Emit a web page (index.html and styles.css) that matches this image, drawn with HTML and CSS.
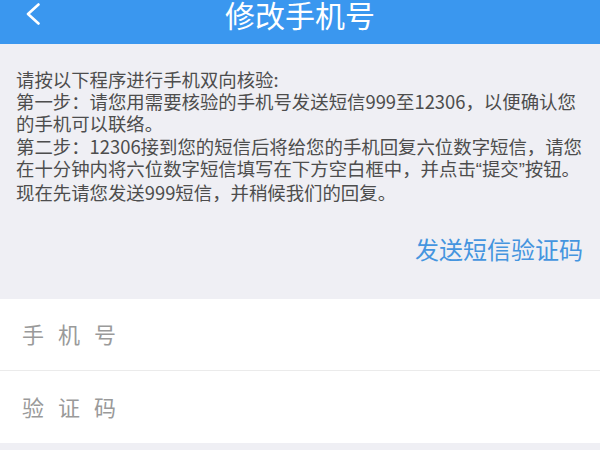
FILE: index.html
```html
<!DOCTYPE html>
<html lang="zh-CN">
<head>
<meta charset="utf-8">
<title>修改手机号</title>
<link rel="stylesheet" href="styles.css">
</head>
<body>
<header class="topbar">
  <span class="back">
    <svg width="16" height="22" viewBox="0 0 16 22"><polyline points="13.5,1.5 3,11 13.5,20.5" fill="none" stroke="#fff" stroke-width="2.6" stroke-linecap="round" stroke-linejoin="round"/></svg>
  </span>
  <h1 class="title">修改手机号</h1>
</header>
<main class="content">
  <div class="intro">
    <span class="line">请按以下程序进行手机双向核验:</span>
    <span class="line">第一步：请您用需要核验的手机号发送短信999至12306，以便确认您</span>
    <span class="line">的手机可以联络。</span>
    <span class="line">第二步：12306接到您的短信后将给您的手机回复六位数字短信，请您</span>
    <span class="line">在十分钟内将六位数字短信填写在下方空白框中，并点击<span class="q">“</span>提交<span class="q">”</span>按钮。</span>
    <span class="line">现在先请您发送999短信，并稍候我们的回复。</span>
  </div>
  <div class="send-row"><a class="send-link">发送短信验证码</a></div>
  <div class="form">
    <div class="field"><span class="label">手机号</span></div>
    <div class="field"><span class="label">验证码</span></div>
  </div>
</main>
</body>
</html>
```
FILE: styles.css
```css
* { box-sizing: border-box; }
html, body { margin: 0; padding: 0; }
body {
  width: 600px;
  height: 450px;
  overflow: hidden;
  background: #efeff4;
  font-family: "Noto Sans CJK SC", "Noto Sans", sans-serif;
}
.topbar {
  position: relative;
  height: 44px;
  background: #3a97ef;
  display: flex;
  justify-content: center;
  align-items: flex-start;
}
.back {
  position: absolute;
  left: 25px;
  top: 3px;
  width: 16px;
  height: 22px;
  display: flex;
}
.title {
  margin: 0;
  font-size: 30px;
  line-height: 29px;
  font-weight: normal;
  color: #fff;
}
.content {
  padding-top: 24px;
}
.intro {
  padding: 0 16px;
  font-size: 18.4px;
  line-height: 22.2px;
  color: #4d4d4d;
}
.line {
  display: block;
  white-space: nowrap;
}
.q {
  font-family: "Liberation Sans", sans-serif;
}
.send-row {
  display: flex;
  justify-content: flex-end;
  padding: 31px 17px 0 0;
  height: 96px;
}
.send-link {
  font-size: 24px;
  line-height: 30px;
  color: #4595df;
}
.form {
  background: #fff;
}
.field {
  height: 72px;
  display: flex;
  align-items: center;
  padding-left: 22px;
  padding-bottom: 3px;
  border-bottom: 1px solid #ebebeb;
}
.field:last-child { border-bottom: none; }
.label {
  font-size: 22px;
  letter-spacing: 14px;
  color: #9a9a9a;
}
```
